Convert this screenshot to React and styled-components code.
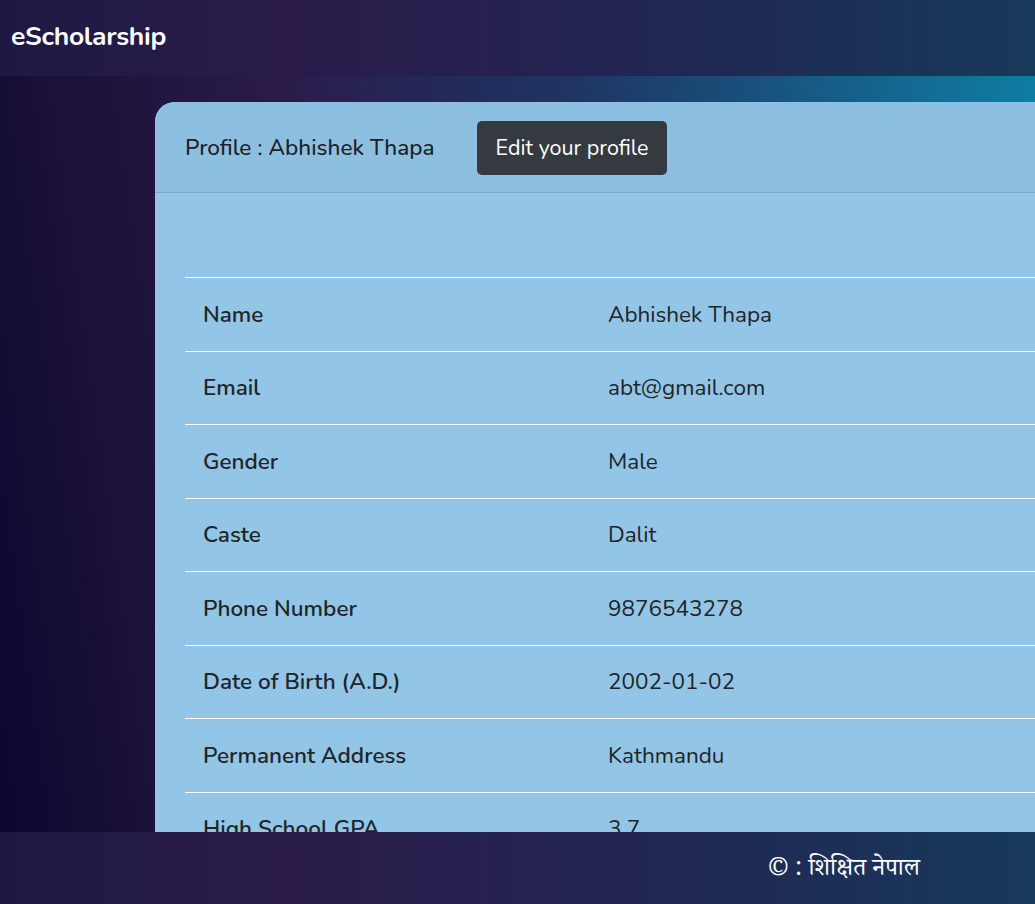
import React from 'react'
import styled, { createGlobalStyle } from 'styled-components'

const GlobalStyle = createGlobalStyle`
  html, body {
    margin: 0;
    padding: 0;
    overflow: hidden;
  }
  body {
    font-family: "Nunito", "Lato", "Noto Sans", sans-serif;
  }
`;

const Page = styled.div`
  display: flex;
  flex-direction: column;
  height: 904px;
  overflow: hidden;
`;

const Nav = styled.nav`
  height: 76px;
  flex-shrink: 0;
  display: flex;
  align-items: center;
  padding: 0 11px 4px;
  box-sizing: border-box;
  background: linear-gradient(90deg, #1e1944 0%, #2a1b49 28%, #222451 60%, #173a5c 100%);
`;

const Brand = styled.span`
  color: #fff;
  font-size: 26.5px;
  font-weight: 700;
  letter-spacing: -0.3px;
`;

const Main = styled.main`
  flex: 1;
  overflow: hidden;
  padding: 26px 0 0 155px;
  background: linear-gradient(82deg, #0b0630 0%, #1a1038 14%, #2a1b4a 34%, #1e3564 60%, #0f7da3 100%);
`;

const Card = styled.section`
  width: 1100px;
  border-radius: 20px 20px 0 0;
  background: #93c5e6;
  overflow: hidden;
`;

const CardHeader = styled.header`
  display: flex;
  align-items: center;
  gap: 42px;
  height: 90px;
  padding: 0 30px;
  background: #8dbfe0;
  border-bottom: 1px solid #7aa8c8;
`;

const Title = styled.h2`
  margin: 0;
  font-size: 22.6px;
  font-weight: 500;
  color: #1d2126;
`;

const EditButton = styled.button`
  height: 54px;
  padding: 0 19px;
  border: none;
  border-radius: 5px;
  background: #343a40;
  color: #fff;
  font-family: inherit;
  font-size: 21.5px;
  margin-top: 2px;
`;

const CardBody = styled.div`
  padding: 84px 0 0 30px;
`;

const Table = styled.table`
  width: 100%;
  border-collapse: collapse;
  color: #212529;
  font-size: 22.5px;
`;

const Row = styled.tr`
  height: 73.5px;
  border-top: 1px solid #ffffff;
`;

const Label = styled.th`
  width: 387px;
  padding: 0 18px;
  text-align: left;
  font-weight: 600;
`;

const Value = styled.td`
  padding: 0;
  font-weight: 400;
`;

const Footer = styled.footer`
  position: fixed;
  left: 0;
  right: 0;
  bottom: 0;
  height: 72px;
  display: flex;
  align-items: center;
  padding: 6px 0 0 768px;
  box-sizing: border-box;
  background: linear-gradient(90deg, #1e1944 0%, #2a1b49 28%, #222451 60%, #173a5c 100%);
`;

const FooterText = styled.span`
  color: #fff;
  font-size: 24.5px;
  font-family: "Noto Serif Devanagari", "Noto Sans Devanagari", "Lohit Devanagari", "FreeSerif", serif;
`;

const rows = [
  ['Name', 'Abhishek Thapa'],
  ['Email', 'abt@gmail.com'],
  ['Gender', 'Male'],
  ['Caste', 'Dalit'],
  ['Phone Number', '9876543278'],
  ['Date of Birth (A.D.)', '2002-01-02'],
  ['Permanent Address', 'Kathmandu'],
  ['High School GPA', '3.7'],
  ['Bachelor Program', 'BSc CSIT'],
];

const App = () => {
  return (
    <Page>
      <GlobalStyle />
      <Nav>
        <Brand>eScholarship</Brand>
      </Nav>
      <Main>
        <Card>
          <CardHeader>
            <Title>Profile : Abhishek Thapa</Title>
            <EditButton>Edit your profile</EditButton>
          </CardHeader>
          <CardBody>
            <Table>
              <tbody>
                {rows.map(([k, v]) => (
                  <Row key={k}>
                    <Label>{k}</Label>
                    <Value>{v}</Value>
                  </Row>
                ))}
              </tbody>
            </Table>
          </CardBody>
        </Card>
      </Main>
      <Footer>
        <FooterText>© : शिक्षित नेपाल</FooterText>
      </Footer>
    </Page>
  )
}

export default App
